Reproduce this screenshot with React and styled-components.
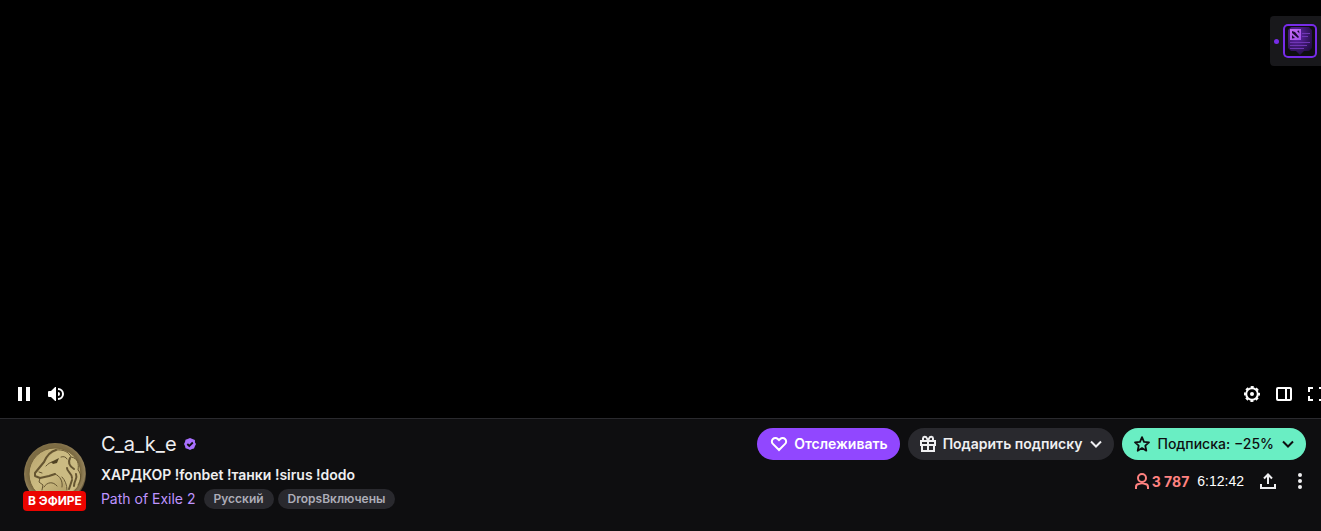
import React from "react";
import styled, { createGlobalStyle } from "styled-components";

const GlobalStyle = createGlobalStyle`
  *, *::before, *::after { box-sizing: border-box; }
  html, body { margin: 0; background: #0e0e10; }
  body {
    font-family: Inter, "Noto Sans", sans-serif;
    font-size: 14px;
    color: #efeff1;
  }
  button { font-family: inherit; border: 0; padding: 0; margin: 0; cursor: pointer; }
`;

const Page = styled.div`
  display: flex;
  flex-direction: column;
  min-height: 100vh;
`;

const Player = styled.section`
  position: relative;
  flex: 1;
  min-height: 240px;
  display: flex;
  flex-direction: column;
  justify-content: flex-end;
  overflow: hidden;
  background: #000;
`;

const Controls = styled.div`
  display: flex;
  justify-content: space-between;
  padding: 8px;
`;

const ControlGroup = styled.div`
  display: flex;
  margin-right: ${(p) => (p.$bleed ? "-19px" : "0")};
`;

const IconButton = styled.button`
  display: flex;
  align-items: center;
  justify-content: center;
  width: 32px;
  height: 32px;
  background: transparent;
  color: ${(p) => (p.$player ? "#fff" : "#efeff1")};
`;

const ExtensionDock = styled.div`
  position: absolute;
  top: 16px;
  right: 0;
  display: flex;
  align-items: center;
  gap: 4px;
  height: 50px;
  padding: 0 4px;
  border-radius: 4px 0 0 4px;
  background: #18181b;
`;

const Dot = styled.span`
  width: 5px;
  height: 5px;
  border-radius: 50%;
  background: #772ce8;
`;

const ExtensionButton = styled.button`
  display: flex;
  align-items: center;
  justify-content: center;
  width: 34px;
  height: 34px;
  border-radius: 5px;
  background: #0e0e10;
  box-shadow: inset 0 0 0 2px #772ce8;
`;

const Info = styled.section`
  display: flex;
  justify-content: space-between;
  gap: 16px;
  border-top: 1px solid #2a2a2e;
  padding: 9px 15px 20px 23px;
`;

const Channel = styled.div`
  display: flex;
  gap: 15px;
  min-width: 0;
`;

const AvatarLink = styled.a`
  display: flex;
  flex-direction: column;
  align-items: flex-end;
  flex: none;
  padding-top: 15px;
  text-decoration: none;
`;

const LiveBadge = styled.span`
  position: relative;
  margin-top: -14px;
  padding: 0 4px 0 5px;
  border-radius: 4px;
  background: #eb0400;
  color: #fff;
  font-size: 12px;
  font-weight: 700;
  line-height: 20px;
  white-space: nowrap;
`;

const Details = styled.div`
  display: flex;
  flex-direction: column;
  min-width: 0;
`;

const NameRow = styled.div`
  display: flex;
  align-items: center;
  gap: 7px;
`;

const Name = styled.h1`
  margin: 0;
  font-size: 20px;
  font-weight: 400;
  line-height: 32px;
`;

const StreamTitle = styled.h2`
  margin: 5px 0 4px;
  font-size: 14px;
  font-weight: 600;
  line-height: 20px;
`;

const MetaRow = styled.div`
  display: flex;
  align-items: center;
  gap: 4px;
`;

const Category = styled.a`
  margin-right: 4px;
  color: #bf94ff;
  font-size: 14px;
  line-height: 20px;
  text-decoration: none;
`;

const Tag = styled.a`
  padding: 0 10px;
  border-radius: 10px;
  background: #29292e;
  color: #adadb8;
  font-size: 12px;
  font-weight: 600;
  line-height: 20px;
  text-decoration: none;
`;

const Side = styled.div`
  display: flex;
  flex-direction: column;
  align-items: flex-end;
  gap: 5px;
  flex: none;
`;

const Actions = styled.div`
  display: flex;
  gap: 8px;
`;

const tones = {
  follow: "background: #9147ff; color: #fff; padding: 0 12px; font-weight: 600;",
  gift: "background: #29292e; color: #efeff1; padding: 0 8px 0 10px; font-weight: 600;",
  subscribe: "background: #69eec3; color: #0e0e10; padding: 0 8px 0 10px; font-weight: 500;",
};

const PillButton = styled.button`
  display: flex;
  align-items: center;
  gap: 4px;
  height: 32px;
  border-radius: 16px;
  font-size: 14px;
  line-height: 20px;
  white-space: nowrap;
  ${(p) => tones[p.$tone]}
`;

const PillLabel = styled.span`
  padding-left: 1px;
`;

const Stats = styled.div`
  display: flex;
  align-items: center;
  margin-right: -10px;
`;

const Viewers = styled.span`
  display: flex;
  align-items: center;
  color: #ff8280;
  font-weight: 700;
`;

const Uptime = styled.time`
  margin: 0 8px;
  color: #fff;
  font-family: "Liberation Sans", sans-serif;
  font-size: 14px;
`;

const Svg = ({ size = 20, box = 20, children }) => (
  <svg width={size} height={size} viewBox={`0 0 ${box} ${box}`} fill="none" aria-hidden="true">
    {children}
  </svg>
);

const line = { stroke: "currentColor", strokeWidth: 2 };

const PauseIcon = () => (
  <Svg><path d="M4 3h4v14H4zM12 3h4v14h-4z" fill="currentColor" /></Svg>
);

const VolumeIcon = () => (
  <Svg>
    <path d="m5 7 4.100-4H10v14h-.9L5 13H3a1 1 0 0 1-1-1V8a1 1 0 0 1 1-1h2z" fill="currentColor" />
    <path d="M12 5a5 5 0 0 1 0 10" {...line} />
    <path d="M12 8a2 2 0 0 1 0 4z" fill="currentColor" />
  </Svg>
);

const GearIcon = () => (
  <Svg>
    <circle cx="10" cy="10" r="2" fill="currentColor" />
    <circle cx="10" cy="10" r="5.800" stroke="currentColor" strokeWidth="2" />
    <circle
      cx="10"
      cy="10"
      r="7"
      stroke="currentColor"
      strokeWidth="2"
      strokeDasharray="3 2.498"
      strokeDashoffset="1.500"
    />
  </Svg>
);

const TheatreIcon = () => (
  <Svg><rect x="3" y="4" width="14" height="12" rx="1" {...line} /><path d="M12 4v12" {...line} /></Svg>
);

const FullscreenIcon = () => (
  <Svg><path d="M7 4H3v4M3 12v4h4M13 4h4v4M17 12v4h-4" {...line} /></Svg>
);

const HeartIcon = () => (
  <Svg>
    <path d="M10 16 3.900 9.900a3.400 3.400 0 0 1 0-4.900 3.400 3.400 0 0 1 4.900 0L10 6.200 11.200 5a3.400 3.400 0 0 1 4.900 0 3.400 3.400 0 0 1 0 4.900z" {...line} />
  </Svg>
);

const GiftIcon = () => (
  <Svg>
    <path d="M3 7h14v4H3zM4 11v6h12v-6M10 6v11M10 7 9 4.500C8 2 5 2.500 5 4.500V7M10 7l1-2.500c1-2.500 4-2 4 0V7" {...line} />
  </Svg>
);

const StarIcon = () => (
  <Svg>
    <path d="m10 3.200 2 4.600 5 .5-3.700 3.400 1 5-4.300-2.600-4.300 2.600 1-5L3 8.300l5-.5z" stroke="currentColor" strokeWidth="1.800" strokeLinejoin="round" />
  </Svg>
);

const ChevronIcon = () => (
  <Svg><path d="m5 7.500 5 5 5-5" {...line} /></Svg>
);

const PersonIcon = () => (
  <Svg>
    <circle cx="10" cy="7" r="4" {...line} />
    <path d="M4 18v-2a3 3 0 0 1 3-3c1 0 1.500-.8 3-.8s2 .8 3 .8a3 3 0 0 1 3 3v2" {...line} />
  </Svg>
);

const ShareIcon = () => (
  <Svg><path d="M10 13V4M6 7.500l4-4 4 4M3 13v4h14v-4" {...line} /></Svg>
);

const MoreIcon = () => (
  <Svg>
    <g fill="currentColor"><circle cx="10" cy="4" r="2" /><circle cx="10" cy="10" r="2" /><circle cx="10" cy="16" r="2" /></g>
  </Svg>
);

const VerifiedIcon = () => (
  <Svg size={12} box={12}>
    <path d="M3.600 1.100 6 0l2.400 1.100 2.500 1L11 4.500 12 6l-1 2-1 2.500-2 .5-2 1-2-1-2.500-.8L1 8 0 6l1-2 .5-2.200z" fill="#a970ff" />
    <path d="m3.300 6 2 2 3.500-3.500" stroke="#0e0e10" strokeWidth="1.800" />
  </Svg>
);

const ExtensionIcon = () => (
  <svg width="26" height="30" viewBox="0 0 26 30" aria-hidden="true">
    <defs>
      <radialGradient id="panel" cx="35%" cy="30%" r="80%">
        <stop offset="0" stopColor="#6727b5" />
        <stop offset="0.600" stopColor="#3a1769" />
        <stop offset="1" stopColor="#1f0b3d" />
      </radialGradient>
      <linearGradient id="tile" x1="0" y1="0" x2="1" y2="1">
        <stop offset="0" stopColor="#c76cf5" />
        <stop offset="1" stopColor="#a04fe8" />
      </linearGradient>
    </defs>
    <path d="M4 1h18l3 3v18l-3 3h-5l-4 4-4-4H4l-3-3V4z" fill="url(#panel)" />
    <path d="M15 7.500h8M15 10.500h6M3 16.500h20M3 19.500h17M3 22.500h14" stroke="#6f35b5" />
    <rect x="3" y="3" width="11" height="11" fill="url(#tile)" />
    <path d="m5 5 3 1 4 5-1 1-6-5zM10 5l2-.5.500 3zM5 9l3 3-3 .5z" fill="#1d0933" />
  </svg>
);

const CoinAvatar = () => (
  <svg width="62" height="62" viewBox="0 0 62 62" role="img" aria-label="C_a_k_e">
    <defs>
      <radialGradient id="rim" cx="48%" cy="46%" r="54%">
        <stop offset="0.800" stopColor="#7d6c44" />
        <stop offset="0.930" stopColor="#93815a" />
        <stop offset="1" stopColor="#453a22" />
      </radialGradient>
      <linearGradient id="face" x1="0" y1="0" x2="1" y2="1">
        <stop offset="0" stopColor="#b6a36e" />
        <stop offset="0.450" stopColor="#cdbc82" />
        <stop offset="1" stopColor="#a08d58" />
      </linearGradient>
    </defs>
    <circle cx="31" cy="31" r="31" fill="url(#rim)" />
    <circle cx="31" cy="31" r="26" fill="url(#face)" stroke="#75643c" />
    <path d="M28 11C34 5 44 7 48 14c6 2 8 8 6 14 4 5 2 11-1 16l-9 8-4-14-7-7-9 2-9 3-5-2v-4l9-9z" fill="#cbbb82" />
    <g fill="none" stroke="#655531" strokeLinecap="round" strokeLinejoin="round">
      <path d="M32 7c-4 1-9 5-12 12l-9 11v3l5 2 9-2 6-2" strokeWidth="2" />
      <path d="M32 7c7-1 13 2 15 7 7 1 8 7 7 13 4 4 3 10 0 15" strokeWidth="1" />
      <path d="M16 35l-1 4 4 3-1 5M31 31c5 2 8 7 7 13M20 44c3-5 9-6 13-1M38 34c3 3 5 8 5 13" strokeWidth="1" />
      <path d="M46 15c-2 4-1 8 4 11M43 25c0 4 5 5 5 10M52 31c2 5-2 6-2 12M48 37l-3 9" strokeWidth="2" />
      <path d="M22 23c2-2 4-4 7-4M37 14c3-1 5 0 6 2M15 29l3 1" strokeWidth="1" />
    </g>
    <path d="m27 19 8-4-2 5-4 1z" fill="#504323" />
  </svg>
);

export default function App() {
  return (
    <>
      <GlobalStyle />
      <Page>
        <Player aria-label="Видеоплеер">
          <ExtensionDock>
            <Dot />
            <ExtensionButton aria-label="Расширение"><ExtensionIcon /></ExtensionButton>
          </ExtensionDock>
          <Controls>
            <ControlGroup>
              <IconButton $player aria-label="Пауза"><PauseIcon /></IconButton>
              <IconButton $player aria-label="Звук"><VolumeIcon /></IconButton>
            </ControlGroup>
            <ControlGroup $bleed>
              <IconButton $player aria-label="Настройки"><GearIcon /></IconButton>
              <IconButton $player aria-label="Театральный режим"><TheatreIcon /></IconButton>
              <IconButton $player aria-label="Полный экран"><FullscreenIcon /></IconButton>
            </ControlGroup>
          </Controls>
        </Player>
        <Info>
          <Channel>
            <AvatarLink href="#channel">
              <CoinAvatar />
              <LiveBadge>В ЭФИРЕ</LiveBadge>
            </AvatarLink>
            <Details>
              <NameRow>
                <Name>C_a_k_e</Name>
                <VerifiedIcon />
              </NameRow>
              <StreamTitle>ХАРДКОР !fonbet !танки !sirus !dodo</StreamTitle>
              <MetaRow>
                <Category href="#category">Path of Exile 2</Category>
                <Tag href="#russian">Русский</Tag>
                <Tag href="#drops">DropsВключены</Tag>
              </MetaRow>
            </Details>
          </Channel>
          <Side>
            <Actions>
              <PillButton $tone="follow"><HeartIcon /><PillLabel>Отслеживать</PillLabel></PillButton>
              <PillButton $tone="gift"><GiftIcon /><PillLabel>Подарить подписку</PillLabel><ChevronIcon /></PillButton>
              <PillButton $tone="subscribe"><StarIcon /><PillLabel>Подписка: −25%</PillLabel><ChevronIcon /></PillButton>
            </Actions>
            <Stats>
              <Viewers><PersonIcon />3 787</Viewers>
              <Uptime>6:12:42</Uptime>
              <IconButton aria-label="Поделиться"><ShareIcon /></IconButton>
              <IconButton aria-label="Ещё"><MoreIcon /></IconButton>
            </Stats>
          </Side>
        </Info>
      </Page>
    </>
  );
}
